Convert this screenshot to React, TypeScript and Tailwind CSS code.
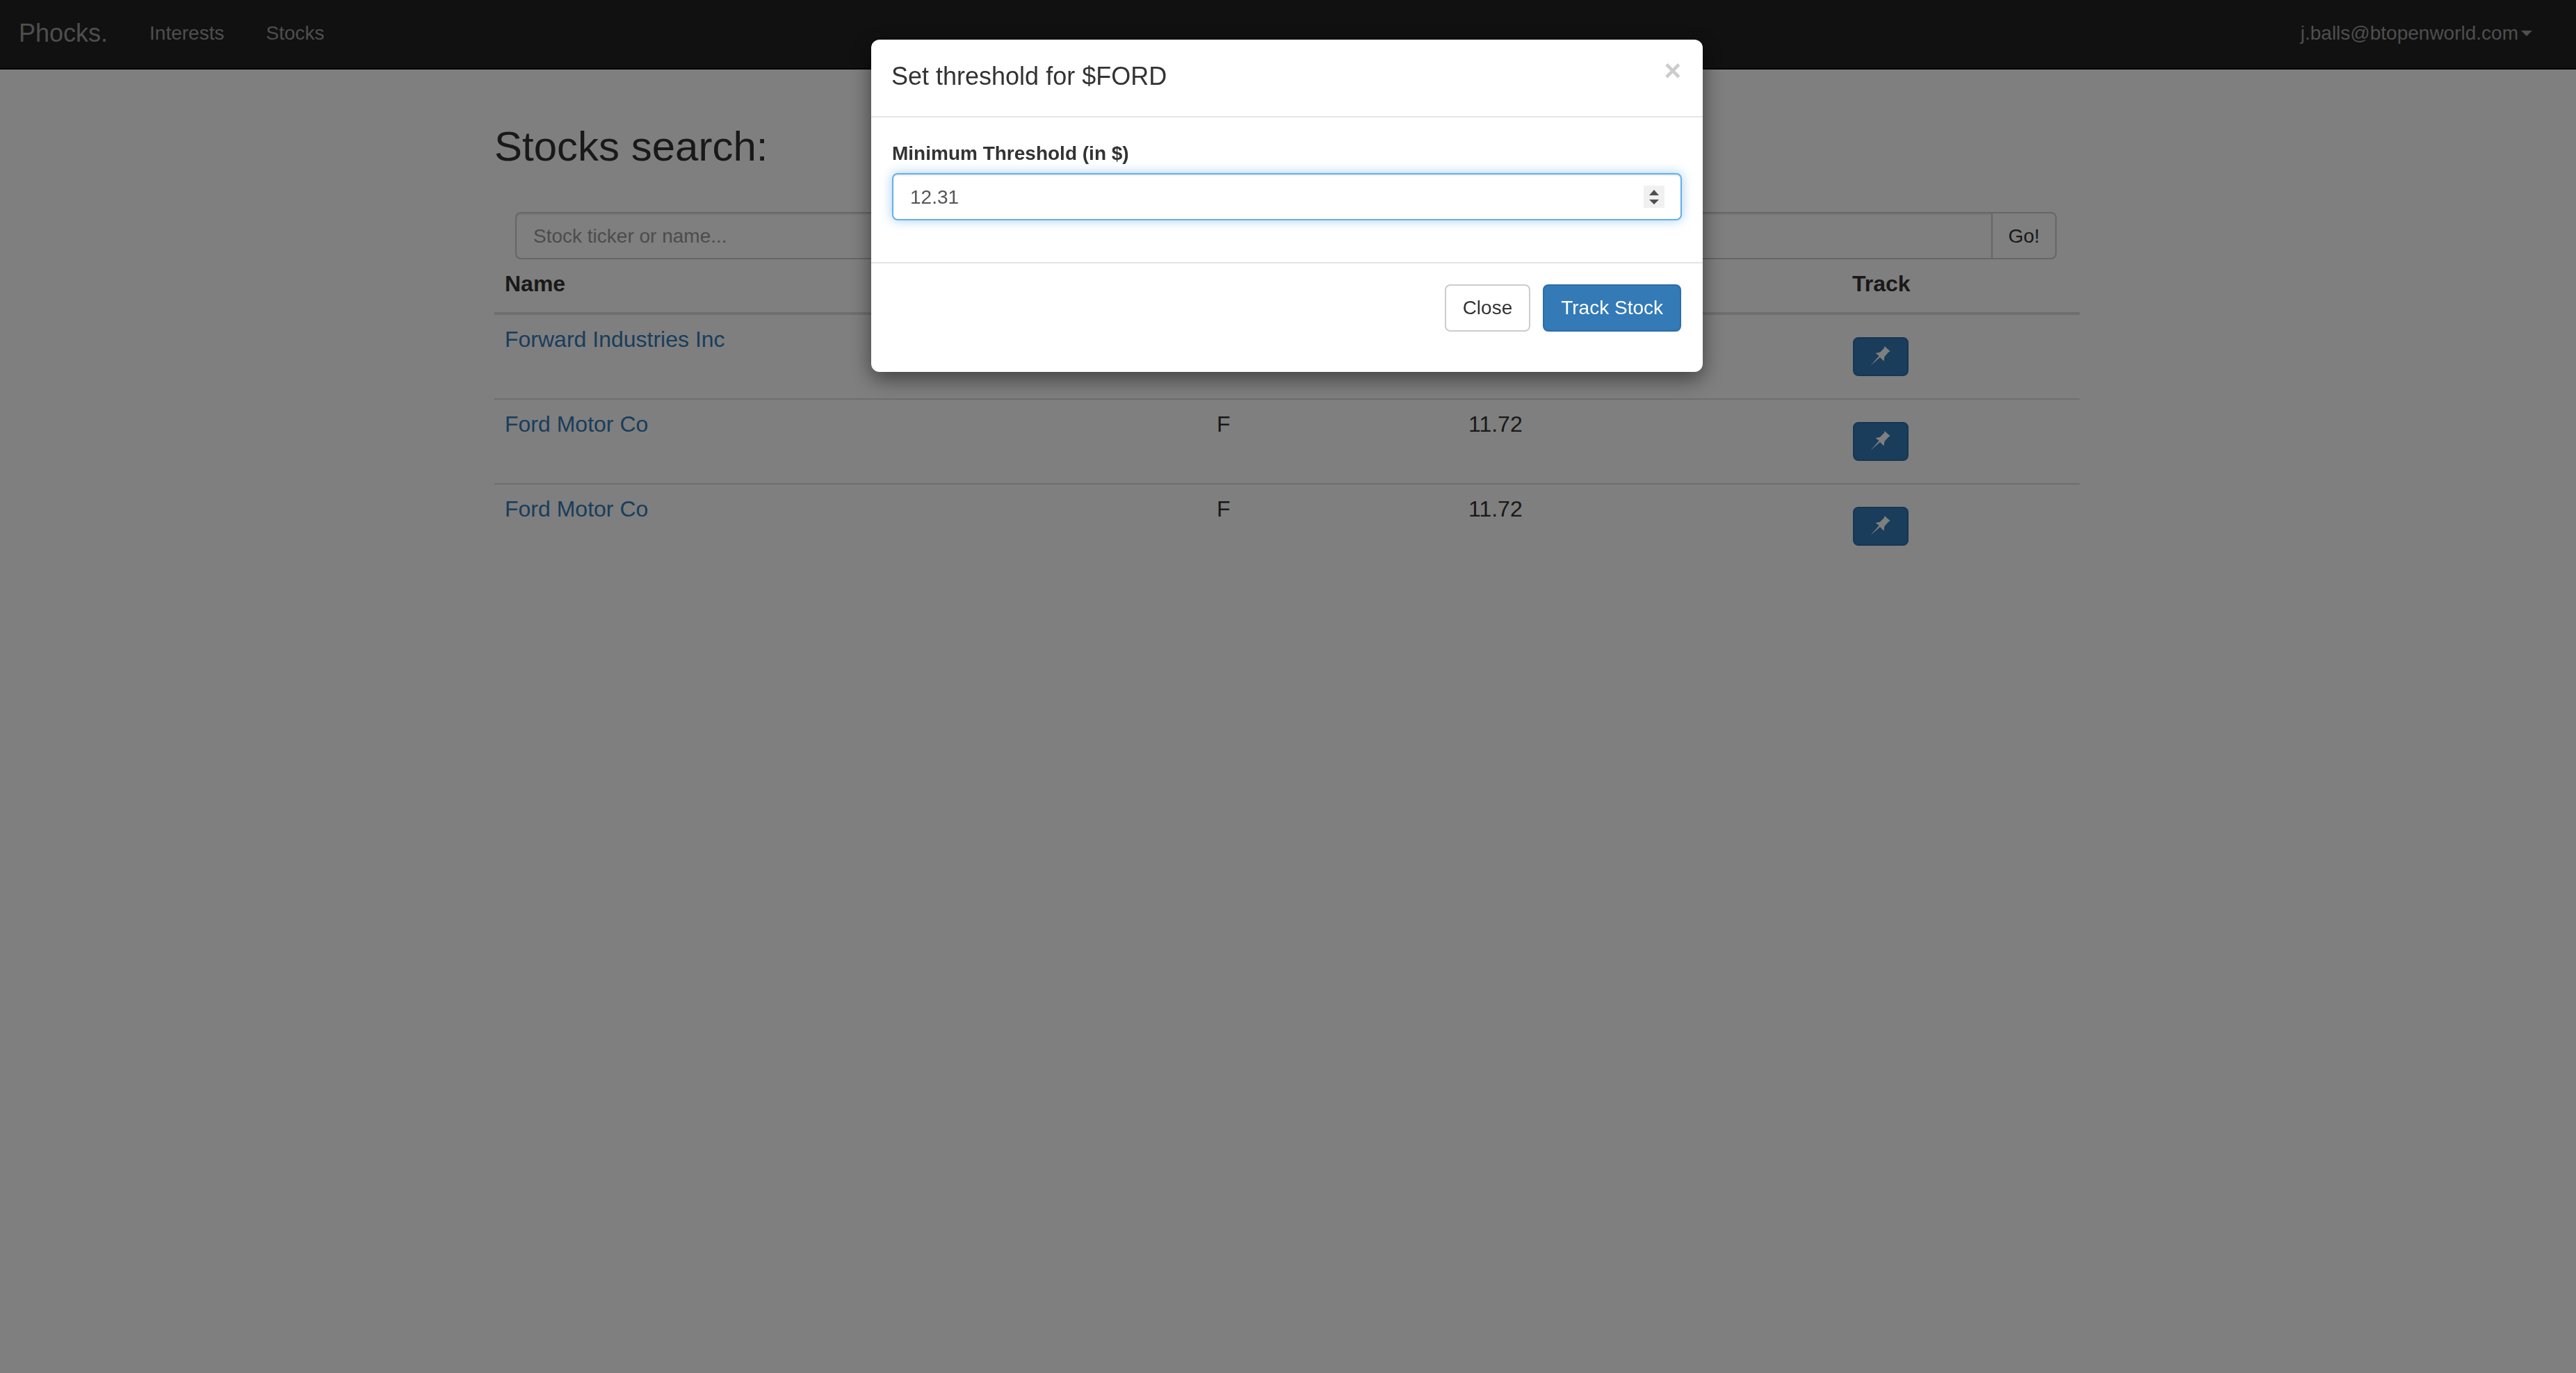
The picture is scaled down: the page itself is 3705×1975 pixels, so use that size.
const rows = [
  { name: 'Forward Industries Inc', ticker: '', price: '' },
  { name: 'Ford Motor Co', ticker: 'F', price: '11.72' },
  { name: 'Ford Motor Co', ticker: 'F', price: '11.72' },
];

function PinIcon() {
  return (
    <svg viewBox="0 0 85 85" className="w-[29px] h-[29px] -ml-[2px] -mt-[1px] fill-white">
      <path d="M60 0 L84 21 L77 25 L60 44 L57 63 L41 47 L0 83 L37 41 L22 29 L41 26 L58 9 Z" />
    </svg>
  );
}

function Navbar() {
  return (
    <nav className="h-[100px] bg-[#222222] border-b-2 border-[#080808] flex items-start justify-between">
      <div className="flex items-start">
        <a className="pl-[27px] pr-[30px] pt-[28px] text-[36px] leading-[40px] text-[#9d9d9d]">Phocks.</a>
        <a className="px-[30px] pt-[28px] text-[28px] leading-[40px] text-[#9d9d9d]">Interests</a>
        <a className="px-[30px] pt-[28px] text-[28px] leading-[40px] text-[#9d9d9d]">Stocks</a>
      </div>
      <a className="flex items-center pr-[63px] pt-[28px] text-[28px] leading-[40px] text-[#9d9d9d]">
        j.balls@btopenworld.com
        <span className="ml-[4px] border-x-[8px] border-t-[8px] border-x-transparent border-t-[#9d9d9d]" />
      </a>
    </nav>
  );
}

function StocksSearch() {
  return (
    <main className="ml-[711px] w-[2280px] pt-[78px]">
      <h2 className="text-[60px] leading-[66px] text-[#333333]">Stocks search:</h2>

      <div className="flex mt-[61px] ml-[30px] mr-[33px] h-[68px]">
        <input
          placeholder="Stock ticker or name..."
          className="flex-1 min-w-0 h-full px-[24px] pt-[1px] border-2 border-[#cccccc] rounded-l-[8px] bg-white text-[28px] text-[#555555] placeholder:text-[#999999] shadow-[inset_0_2px_2px_rgba(0,0,0,0.075)]"
        />
        <button className="w-[94px] -ml-[2px] h-full pt-[1px] border-2 border-[#cccccc] rounded-r-[8px] bg-white text-[28px] text-[#333333]">
          Go!
        </button>
      </div>

      <div className="grid grid-cols-[1025px_361px_551px_343px] h-[80px] pt-[12px] border-b-4 border-[#dddddd] text-[32px] leading-[46px] font-bold text-[#333333]">
        <div className="px-[15px]">Name</div>
        <div />
        <div />
        <div className="px-[16px]">Track</div>
      </div>

      {rows.map((row, i) => (
        <div
          key={i}
          className={
            i === 0
              ? 'grid grid-cols-[1025px_361px_551px_343px] h-[120px] text-[32px] leading-[46px] text-[#333333]'
              : 'grid grid-cols-[1025px_361px_551px_343px] h-[122px] border-t-2 border-[#dddddd] text-[32px] leading-[46px] text-[#333333]'
          }
        >
          <div className="px-[15px] pt-[12px]">
            <a className="text-[#337ab7]">{row.name}</a>
          </div>
          <div className="px-[14px] pt-[12px]">{row.ticker}</div>
          <div className="px-[15px] pt-[12px]">{row.price}</div>
          <div className="px-[17px] pt-[32px]">
            <button className="w-[80px] h-[56px] flex items-center justify-center rounded-[8px] bg-[#337ab7] border-2 border-[#2e6da4]">
              <PinIcon />
            </button>
          </div>
        </div>
      ))}
    </main>
  );
}

function ThresholdModal() {
  return (
    <div className="fixed inset-0 bg-black/50">
      <div className="ml-[1253px] mt-[57px] w-[1196px] h-[478px] bg-white rounded-[12px] shadow-[0_10px_30px_rgba(0,0,0,0.5)]">
        <header className="h-[112px] flex items-start justify-between pl-[29px] pr-[31px] pt-[28px] border-b-2 border-[#e5e5e5]">
          <h4 className="text-[36px] leading-[50px] text-[#333333]">Set threshold for $FORD</h4>
          <button className="text-[42px] leading-[42px] font-bold text-[#cccccc] -mt-[4px]">×</button>
        </header>

        <div className="h-[208px] px-[30px] pt-[32px]">
          <label className="block mb-[8px] text-[28px] leading-[40px] font-bold text-[#333333]">
            Minimum Threshold (in $)
          </label>
          <div className="relative">
            <input
              defaultValue="12.31"
              className="w-full h-[68px] px-[24px] pt-[1px] border-2 border-[#66afe9] rounded-[8px] bg-white text-[28px] text-[#555555] outline-none shadow-[inset_0_2px_2px_rgba(0,0,0,0.075),0_0_16px_rgba(102,175,233,0.6)]"
            />
            <span className="absolute top-[18px] right-[25px] w-[30px] h-[32px] bg-[#f0f0f0] flex items-center justify-center">
              <svg viewBox="0 0 14 21" className="w-[14px] h-[21px] fill-[#505050]">
                <path d="M7 0 L14 8 L0 8 Z M0 14 L14 14 L7 21 Z" />
              </svg>
            </span>
          </div>
        </div>

        <footer className="flex justify-end gap-[18px] pl-[30px] pr-[31px] pt-[30px] border-t-2 border-[#e5e5e5]">
          <button className="h-[68px] px-[24px] border-2 border-[#cccccc] rounded-[8px] bg-white text-[28px] text-[#333333]">
            Close
          </button>
          <button className="h-[68px] px-[24px] border-2 border-[#2e6da4] rounded-[8px] bg-[#337ab7] text-[28px] text-white">
            Track Stock
          </button>
        </footer>
      </div>
    </div>
  );
}

export default function App() {
  return (
    <div className="min-h-screen bg-white font-['Liberation_Sans',Arial,sans-serif]">
      <Navbar />
      <StocksSearch />
      <ThresholdModal />
    </div>
  );
}
